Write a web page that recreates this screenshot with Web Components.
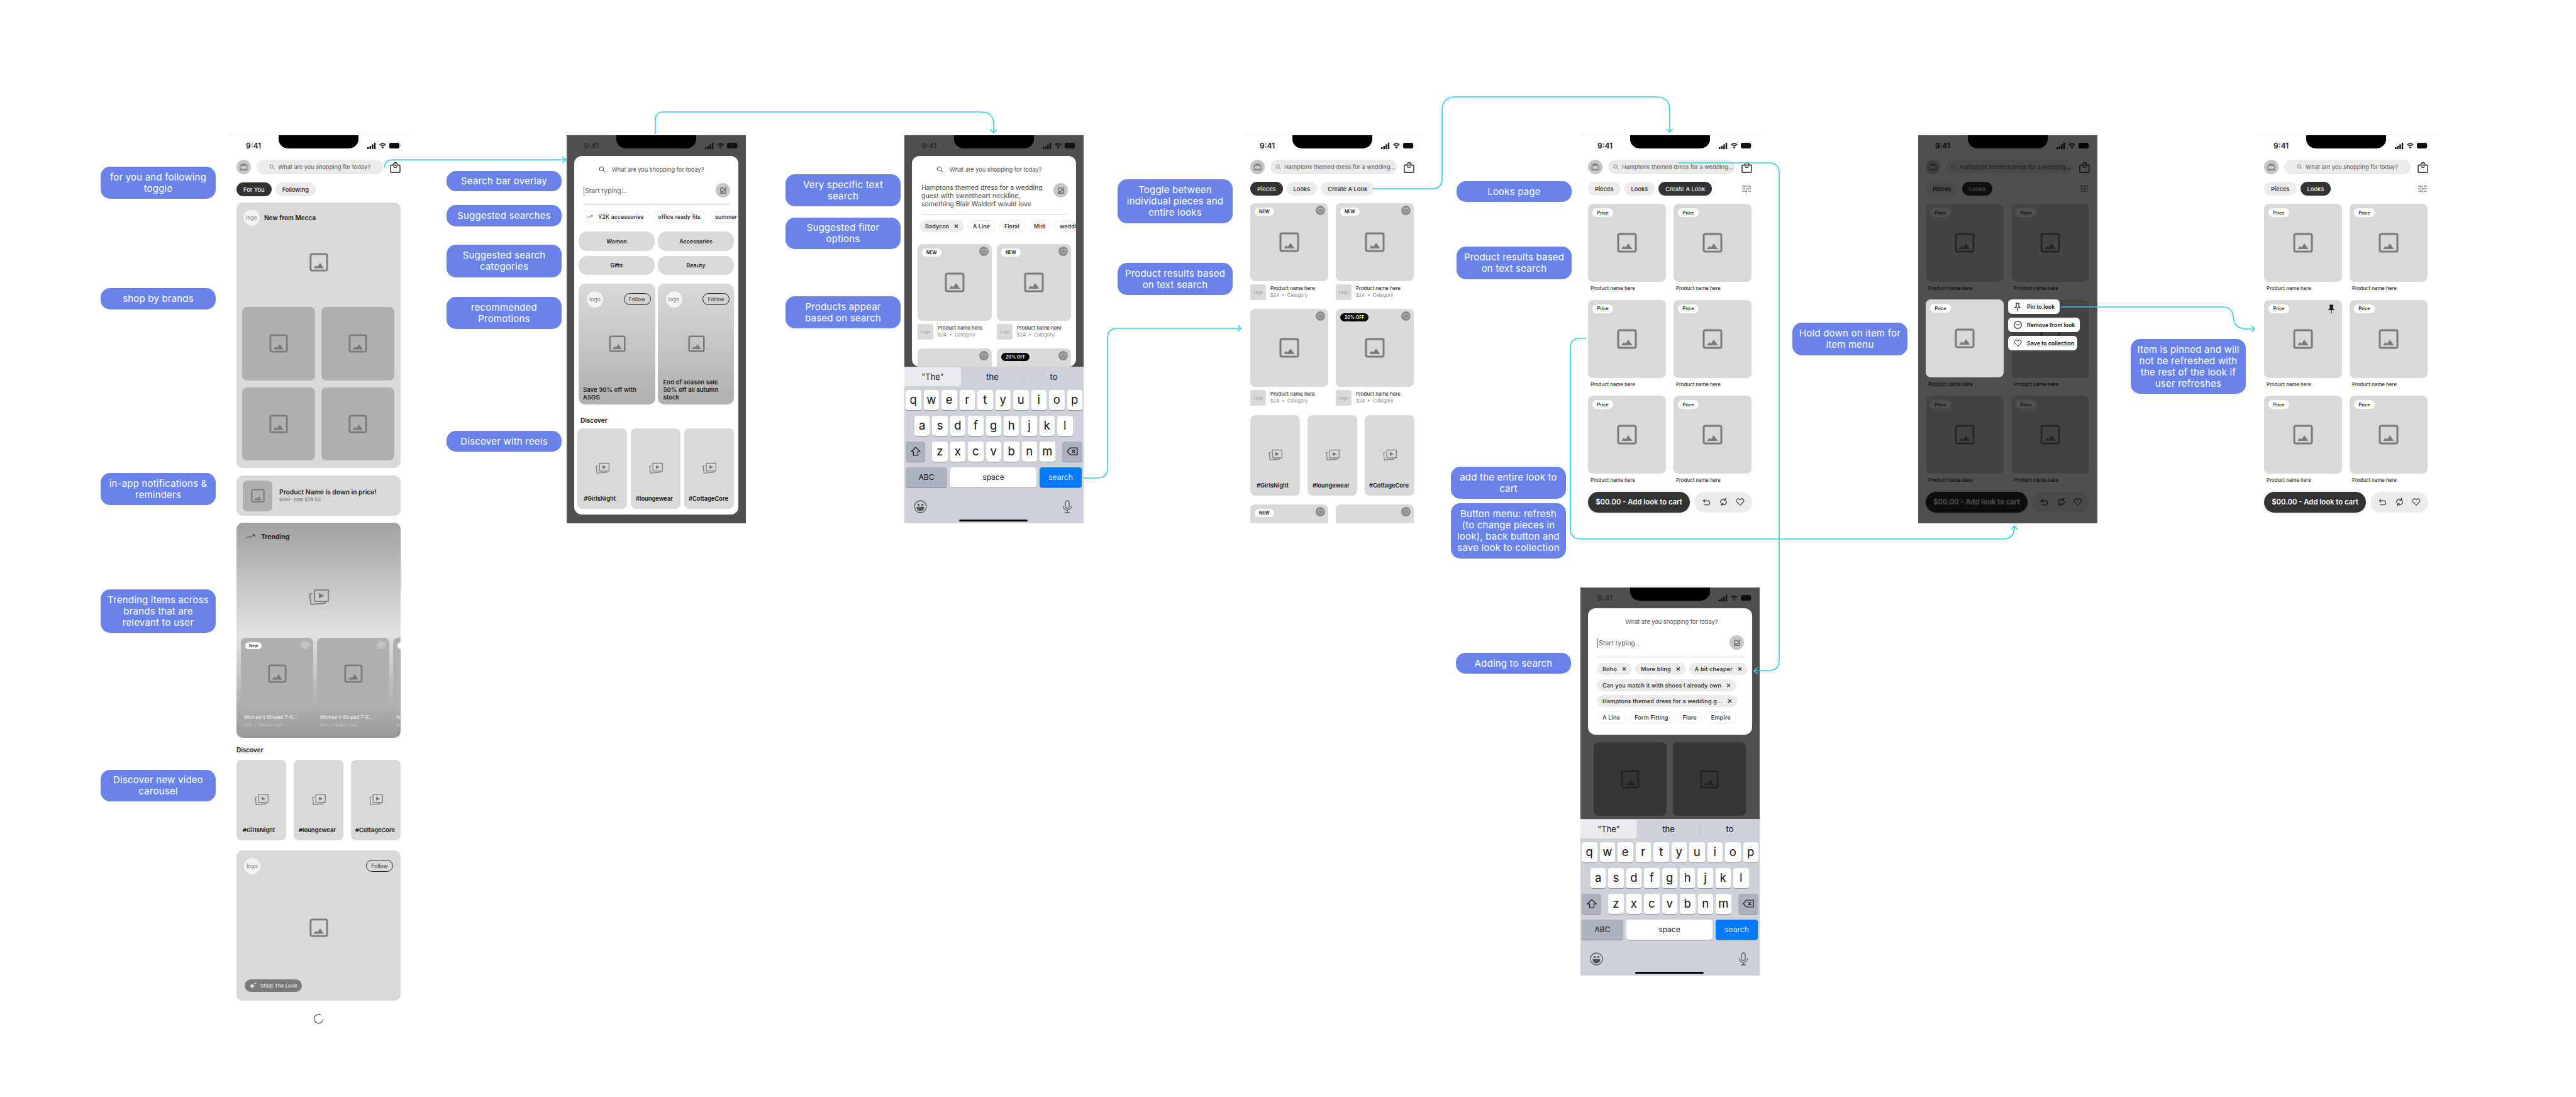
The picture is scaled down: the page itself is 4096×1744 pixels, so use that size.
<!DOCTYPE html>
<html>
<head>
<meta charset="utf-8">
<title>Shopping flow</title>
<style>
  html, body { margin: 0; background: #fff; }
  body { font-family: 'Inter', 'Noto Sans', sans-serif; color: #111; }
</style>
</head>
<body>
<flow-canvas>
  <!-- column 1 -->
  <note-chip x="160" y="265" h="51">for you and following toggle</note-chip>
  <note-chip x="160" y="458" h="34">shop by brands</note-chip>
  <note-chip x="160" y="752" h="51">in-app notifications &amp; reminders</note-chip>
  <note-chip x="160" y="937" h="69">Trending items across brands that are relevant to user</note-chip>
  <note-chip x="160" y="1224" h="50">Discover new video carousel</note-chip>

  <phone-frame x="364" y="214" h="1421">
    <shop-header query="What are you shopping for today?" centered></shop-header>
    <tab-row style="margin-top:13px">
      <tab-pill active>For You</tab-pill><tab-pill>Following</tab-pill>
    </tab-row>
    <screen-stack style="margin-top:10px">
      <brand-card></brand-card>
      <price-alert style="margin-top:12px"></price-alert>
      <trending-card style="margin-top:11px"></trending-card>
      <section-title style="margin-top:12px">Discover</section-title>
      <reel-row style="margin-top:9px"></reel-row>
      <look-promo style="margin-top:16px"></look-promo>
      <load-spinner style="margin-top:20px"></load-spinner>
    </screen-stack>
  </phone-frame>

  <!-- column 2 -->
  <note-chip x="710" y="272" h="32">Search bar overlay</note-chip>
  <note-chip x="710" y="326" h="34">Suggested searches</note-chip>
  <note-chip x="710" y="389" h="52">Suggested search categories</note-chip>
  <note-chip x="710" y="472" h="51">recommended Promotions</note-chip>
  <note-chip x="710" y="685" h="33">Discover with reels</note-chip>

  <phone-frame x="901" y="214" h="618" dark>
    <search-sheet glass style="height:570px">
      <chip-row slot="chips" style="padding-left:10px">
        <filter-chip trend>Y2K accessories</filter-chip>
        <filter-chip>office ready fits</filter-chip>
        <filter-chip>summer fits</filter-chip>
      </chip-row>
      <category-grid style="margin:14px 0 0 7px"></category-grid>
      <promo-pair style="margin:14px 0 0 7px"></promo-pair>
      <section-title style="margin:18px 0 0 10px">Discover</section-title>
      <reel-row style="margin:6px 0 0 5px;width:249px"></reel-row>
    </search-sheet>
  </phone-frame>

  <!-- column 3 -->
  <note-chip x="1249" y="277" h="51">Very specific text search</note-chip>
  <note-chip x="1249" y="346" h="50">Suggested filter options</note-chip>
  <note-chip x="1249" y="471" h="51">Products appear based on search</note-chip>

  <phone-frame x="1438" y="214" h="618" dark>
    <search-sheet glass style="flex:1;min-height:0">
      <span slot="query" style="display:block;margin:2px 0 9px;color:#444">Hamptons themed dress for a wedding<br>guest with sweetheart neckline,<br>something Blair Waldorf would love</span>
      <chip-row slot="chips" style="padding-left:12px">
        <filter-chip selected>Bodycon</filter-chip>
        <filter-chip>A Line</filter-chip>
        <filter-chip>Floral</filter-chip>
        <filter-chip>Midi</filter-chip>
        <filter-chip>wedding</filter-chip>
      </chip-row>
      <product-grid cols="118" gap="8" style="margin:19px 0 0 9px">
        <product-card tile="122" badge="NEW"></product-card>
        <product-card tile="122" badge="NEW"></product-card>
        <product-card tile="122" noinfo></product-card>
        <product-card tile="122" noinfo badge="20% OFF" black></product-card>
      </product-grid>
    </search-sheet>
    <ios-keyboard></ios-keyboard>
  </phone-frame>

  <!-- column 4 -->
  <note-chip x="1777" y="285" h="70">Toggle between individual pieces and entire looks</note-chip>
  <note-chip x="1777" y="418" h="51">Product results based on text search</note-chip>

  <phone-frame x="1976" y="214" h="618">
    <shop-header query="Hamptons themed dress for a wedding..."></shop-header>
    <tab-row style="margin-top:12px">
      <tab-pill active>Pieces</tab-pill><tab-pill>Looks</tab-pill><tab-pill>Create A Look</tab-pill>
    </tab-row>
    <screen-stack style="margin-top:12px">
      <product-grid cols="124" gap="12">
        <product-card tile="124" badge="NEW"></product-card>
        <product-card tile="124" badge="NEW"></product-card>
        <product-card tile="124"></product-card>
        <product-card tile="124" badge="20% OFF" black></product-card>
      </product-grid>
      <reel-row style="margin-top:15px"></reel-row>
      <product-grid cols="124" gap="12" style="margin-top:14px">
        <product-card tile="124" noinfo badge="NEW"></product-card>
        <product-card tile="124" noinfo></product-card>
      </product-grid>
    </screen-stack>
  </phone-frame>

  <!-- column 5 -->
  <note-chip x="2316" y="288" h="33">Looks page</note-chip>
  <note-chip x="2316" y="392" h="52">Product results based on text search</note-chip>
  <note-chip x="2307" y="742" h="51">add the entire look to cart</note-chip>
  <note-chip x="2307" y="800" h="88">Button menu: refresh (to change pieces in look), back button and save look to collection</note-chip>
  <note-chip x="2315" y="1038" h="33">Adding to search</note-chip>

  <phone-frame x="2513" y="214" h="618">
    <shop-header query="Hamptons themed dress for a wedding..."></shop-header>
    <tab-row filter style="margin-top:12px">
      <tab-pill>Pieces</tab-pill><tab-pill>Looks</tab-pill><tab-pill active>Create A Look</tab-pill>
    </tab-row>
    <screen-stack style="margin-top:13px">
      <look-grid></look-grid>
      <look-actions></look-actions>
    </screen-stack>
  </phone-frame>

  <phone-frame x="2513" y="933" h="618" dark>
    <screen-area>
      <search-sheet style="height:201px;margin:0">
        <chip-row slot="chips" wrap style="padding-left:14px;letter-spacing:.2px">
          <filter-chip selected>Boho</filter-chip>
          <filter-chip selected>More bling</filter-chip>
          <filter-chip selected>A bit cheaper</filter-chip>
          <filter-chip selected>Can you match it with shoes I already own</filter-chip>
          <filter-chip selected>Hamptons themed dress for a wedding g...</filter-chip>
          <filter-chip>A Line</filter-chip>
          <filter-chip>Form Fitting</filter-chip>
          <filter-chip>Flare</filter-chip>
          <filter-chip>Empire</filter-chip>
        </chip-row>
      </search-sheet>
      <shade-tiles></shade-tiles>
    </screen-area>
    <ios-keyboard></ios-keyboard>
  </phone-frame>

  <!-- column 6 -->
  <note-chip x="2850" y="513" h="52">Hold down on item for item menu</note-chip>

  <phone-frame x="3050" y="214" h="618" dim>
    <shop-header query="Hamptons themed dress for a wedding..."></shop-header>
    <tab-row filter style="margin-top:12px">
      <tab-pill>Pieces</tab-pill><tab-pill active>Looks</tab-pill>
    </tab-row>
    <screen-stack style="margin-top:13px">
      <look-grid></look-grid>
      <look-actions></look-actions>
    </screen-stack>
    <look-card slot="over" style="position:absolute;left:12px;top:261px;width:124px"></look-card>
    <item-menu slot="over" style="position:absolute;left:143px;top:261px"></item-menu>
  </phone-frame>

  <!-- column 7 -->
  <note-chip x="3388" y="539" h="87">Item is pinned and will not be refreshed with the rest of the look if user refreshes</note-chip>

  <phone-frame x="3588" y="214" h="618">
    <shop-header query="What are you shopping for today?" centered></shop-header>
    <tab-row filter style="margin-top:12px">
      <tab-pill>Pieces</tab-pill><tab-pill active>Looks</tab-pill>
    </tab-row>
    <screen-stack style="margin-top:13px">
      <look-grid pinned="2"></look-grid>
      <look-actions></look-actions>
    </screen-stack>
  </phone-frame>

  <flow-lines></flow-lines>
</flow-canvas>

<script>
// small svg set, all drawn by hand. c = colour
const icons = {
  image: (s, c = '#7a7a7a') => `<svg width="${s}" height="${s}" viewBox="0 0 32 32"><rect x="2" y="2" width="28" height="28" rx="2.5" fill="none" stroke="${c}" stroke-width="3"/><path d="M7 26l4-5 2.500 2.500 4.500-6.500 6.500 9z" fill="${c}"/></svg>`,
  video: (s, c = '#7a7a7a') => `<svg width="${s}" height="${s}" viewBox="0 0 32 32" fill="none" stroke="${c}" stroke-width="1.800"><rect x="9" y="5" width="22" height="18"/><path d="M16 9.500l9 4.500-9 4.500z" fill="${c}" stroke="none"/><path d="M5.500 10.500L1.500 11.500 3.500 28 26 26V23.500"/></svg>`,
  glass: (s, c = '#444') => `<svg width="${s}" height="${s}" viewBox="0 0 16 16" fill="none" stroke="${c}" stroke-width="1.300"><circle cx="6.500" cy="6.500" r="4.800"/><path d="M10 10l4.500 4.500"/></svg>`,
  bag: (c = '#111') => `<svg width="17" height="18" viewBox="0 0 17 18" fill="none" stroke="${c}" stroke-width="1.300"><rect x="1" y="5.500" width="15" height="11.500" rx=".8"/><path d="M5 5.500C5 .5 12 .5 12 5.500M5.500 7.500c1.500 2.500 4.500 2.500 6 0"/></svg>`,
  avatar: () => `<svg width="23" height="23" viewBox="0 0 23 23"><circle cx="11.500" cy="11.500" r="11.500" fill="#c6c6c6"/><path d="M5.500 17V10.500a6 5 0 0 1 12 0V17z" fill="#8d8d8d"/><rect x="7" y="10" width="9" height="4.500" rx="2" fill="#cfcfcf"/></svg>`,
  signal: (c) => `<svg width="14" height="10" viewBox="0 0 14 10" fill="${c}"><rect y="7" width="2.400" height="3"/><rect x="3.600" y="5" width="2.400" height="5"/><rect x="7.200" y="2.500" width="2.400" height="7.500"/><rect x="10.800" width="2.400" height="10"/></svg>`,
  wifi: (c) => `<svg width="11" height="9" viewBox="0 0 11 9" fill="none" stroke="${c}" stroke-width="1.500"><path d="M.7 3.200a7 7 0 0 1 9.600 0M2.500 5.200a4.400 4.400 0 0 1 6 0"/><circle cx="5.500" cy="7.500" r=".7" fill="${c}"/></svg>`,
  battery: (c) => `<svg width="18" height="9" viewBox="0 0 18 9"><rect width="16" height="9" rx="2.500" fill="${c}"/><rect x="16.500" y="3" width="1.200" height="3" rx=".6" fill="${c}" opacity=".5"/></svg>`,
  trend: (s) => `<svg width="${s}" height="${s * .5}" viewBox="0 0 20 10" fill="none" stroke="#222" stroke-width="1.100"><path d="M1 9l5-4.500 3.500 2.500L18 1.500M14 1.200h4.200V5"/></svg>`,
  photoSearch: () => `<svg width="12" height="12" viewBox="0 0 16 16" fill="none" stroke="#555" stroke-width="1.400"><path d="M8 2.500H2.500v11h11V9"/><circle cx="11.500" cy="4.200" r="2.200"/><path d="M8.500 9.500c.4-1.800 5.600-1.800 6 0M4 11.500l2-2.500 2 2.500" /></svg>`,
  cross: (c = '#222') => `<svg width="7" height="7" viewBox="0 0 8 8" fill="none" stroke="${c}" stroke-width="1.300"><path d="M1 1l6 6M7 1L1 7"/></svg>`,
  heart: (s, c, w = 1.300) => `<svg width="${s}" height="${s}" viewBox="0 0 16 16" fill="none" stroke="${c}" stroke-width="${w}"><path d="M8 14L2.300 8.200a3.500 3.500 0 0 1 0-5 3.500 3.500 0 0 1 5 0l.7.8.7-.8a3.500 3.500 0 0 1 5 0 3.500 3.500 0 0 1 0 5z"/></svg>`,
  undo: () => `<svg width="13" height="11" viewBox="0 0 14 12" fill="none" stroke="#333" stroke-width="1.300"><path d="M4 1L1.500 3.500 4 6M1.500 3.500H9a3 3 0 0 1 0 7H2.500"/></svg>`,
  refresh: () => `<svg width="13" height="14" viewBox="0 0 14 15" fill="none" stroke="#333" stroke-width="1.300"><path d="M2 9a5.200 5.200 0 0 1 8-5.500M12 6a5.200 5.200 0 0 1-8 5.500"/><path d="M10.500.8v3.500H7M3.500 14.200v-3.500H7"/></svg>`,
  sliders: () => `<svg width="14" height="14" viewBox="0 0 14 14" fill="none" stroke="#555" stroke-width="1"><path d="M0 3h8M11 3h3M0 7h3M6 7h8M0 11h6M9 11h5M9.500 1v4M4.500 5v4M7.500 9v4"/></svg>`,
  pin: (fill) => `<svg width="12" height="14" viewBox="0 0 12 14" fill="${fill ? '#111' : 'none'}" stroke="#111" stroke-width="1.200"><path d="M3 1h6M4 1v5.500L2 8.500h8L8 6.500V1M6 8.500V14"/></svg>`,
  minus: () => `<svg width="13" height="13" viewBox="0 0 13 13" fill="none" stroke="#111" stroke-width="1.100"><circle cx="6.500" cy="6.500" r="5.800"/><path d="M3.500 6.500h6"/></svg>`,
  spark: () => `<svg width="12" height="12" viewBox="0 0 12 12" fill="#fff"><path d="M5 2l1.200 3.300L9.500 6.500 6.200 7.700 5 11 3.800 7.700.5 6.500l3.300-1.200zM10 .5l.5 1.500 1.500.5-1.500.5-.5 1.500-.5-1.500L8 2.500 9.500 2z"/></svg>`,
  smile: () => `<svg width="21" height="21" viewBox="0 0 21 21" fill="none" stroke="#555" stroke-width="1.300"><circle cx="10.500" cy="10.500" r="9.500"/><path d="M5 11.500h11c0 7-11 7-11 0z" fill="#555"/><circle cx="7.500" cy="7.500" r="1.100" fill="#555"/><circle cx="13.500" cy="7.500" r="1.100" fill="#555"/></svg>`,
  mic: () => `<svg width="16" height="21" viewBox="0 0 16 21" fill="none" stroke="#555" stroke-width="1.300"><rect x="5" y="1" width="6" height="12" rx="3"/><path d="M1.500 9.500a6.500 6.500 0 0 0 13 0M8 16v3.500M4 20h8"/></svg>`,
  shift: () => `<svg width="16" height="15" viewBox="0 0 16 15" fill="none" stroke="#111" stroke-width="1.200"><path d="M8 1L1 8h3.500v6h7V8H15z"/></svg>`,
  del: () => `<svg width="18" height="13" viewBox="0 0 18 13" fill="none" stroke="#111" stroke-width="1.200"><path d="M5.500 1H17v11H5.500L1 6.500zM8.500 4l5 5M13.500 4l-5 5"/></svg>`
};

// every element renders its shadow root once, when it lands in the page
class Box extends HTMLElement {
  connectedCallback() {
    if (this.shadowRoot) return;
    this.attachShadow({ mode: 'open' });
    this.shadowRoot.innerHTML = `<style>${this.constructor.css}</style>${this.render()}`;
  }
  render() { return '<slot></slot>'; }
}

const box = (tag, css, render) => {
  class Element extends Box {
    static get css() { return css; }
    render() { return render ? render(this) : '<slot></slot>'; }
  }
  customElements.define(tag, Element);
};

class FlowCanvas extends Box {
  static get css() { return ':host{display:block;position:relative;width:4096px;height:1744px;background:#fff;overflow:hidden}'; }
}
customElements.define('flow-canvas', FlowCanvas);

// note and phone sit on a free canvas, so their x and y are the content
class NoteChip extends Box {
  static get css() {
    return `:host{position:absolute;width:183px;display:flex;align-items:center;justify-content:center;box-sizing:border-box;
      padding:0 10px;background:#6983ea;border-radius:15px;color:#fff;font-size:15px;line-height:18px;text-align:center;letter-spacing:.2px}`;
  }
  connectedCallback() {
    this.style.left = this.getAttribute('x') + 'px';
    this.style.top = this.getAttribute('y') + 'px';
    this.style.height = this.getAttribute('h') + 'px';
    super.connectedCallback();
  }
}
customElements.define('note-chip', NoteChip);

class PhoneFrame extends Box {
  static get css() {
    return `:host{position:absolute;width:285px;box-sizing:border-box;display:flex;flex-direction:column;overflow:hidden;
        background:#fff;border-top:1px solid #eef0f3;--status:#222}
      :host([dark]){background:#4f4f4f;border-top-color:#fff;--status:#2a2a2a}
      .shade{position:absolute;inset:0;background:rgba(0,0,0,.69)}
      .over{position:absolute;inset:0}`;
  }
  connectedCallback() {
    this.style.left = this.getAttribute('x') + 'px';
    this.style.top = this.getAttribute('y') + 'px';
    this.style.height = this.getAttribute('h') + 'px';
    super.connectedCallback();
  }
  render() {
    const dim = this.hasAttribute('dim');
    return `<status-bar></status-bar><slot></slot>${dim ? '<div class="shade"></div><div class="over"><slot name="over"></slot></div>' : ''}`;
  }
}
customElements.define('phone-frame', PhoneFrame);

box('status-bar', `
  :host{display:flex;flex:none;height:33px;align-items:center;justify-content:space-between;padding:0 12px 0 27px;position:relative;color:var(--status)}
  .time{font-size:12px;font-weight:600}
  .notch{position:absolute;left:79px;top:0;width:127px;height:21px;background:#000;border-radius:0 0 15px 15px}
  .right{display:flex;align-items:center;gap:5px}
  svg{display:block}
`, () => `<span class="time">9:41</span><div class="notch"></div><div class="right">${icons.signal('#111')}${icons.wifi('#111')}${icons.battery('#111')}</div>`);

box('shop-header', `
  :host{display:flex;align-items:center;padding:6px 12px 0;gap:9px;flex:none}
  .search{width:201px;height:23px;border-radius:12px;background:#ebebeb;display:flex;align-items:center;gap:5px;padding:0 8px;box-sizing:border-box;
    font-size:9.200px;color:#555;white-space:nowrap;overflow:hidden}
  :host([centered]) .search{justify-content:center}
  .bag{margin-left:2px}
  svg{display:block;flex:none}
`, (el) => `${icons.avatar()}<div class="search">${icons.glass(9, '#555')}<span>${el.getAttribute('query')}</span></div><div class="bag">${icons.bag()}</div>`);

box('tab-row', `
  :host{display:flex;align-items:center;gap:6px;padding:0 12px;flex:none}
  .f{margin-left:auto;margin-right:2px;display:flex}
`, (el) => `<slot></slot>${el.hasAttribute('filter') ? `<div class="f">${icons.sliders()}</div>` : ''}`);

box('tab-pill', `
  :host{display:inline-flex;align-items:center;height:22px;padding:0 11px;border-radius:11px;background:#ebebeb;color:#222;font-size:9.300px;font-weight:500;white-space:nowrap}
  :host([active]){background:#333;color:#f2f2f2}
`);

box('screen-stack', ':host{display:block;padding:0 12px}');
box('screen-area', ':host{display:block;flex:1;min-height:0;overflow:hidden;padding:0 12px}');
box('section-title', ':host{display:block;font-size:10px;font-weight:600;line-height:14px;color:#111}');

// grey placeholder with an image mark in its middle
box('photo-tile', `
  :host{display:flex;position:relative;align-items:center;justify-content:center;background:#d9d9d9;border-radius:8px;flex:none}
  :host([tone=mid]){background:#b0b0b0}
  :host([tone=black]){background:#363636}
  svg{display:block}
`, (el) => {
  const size = +(el.getAttribute('icon') || 32);
  const c = el.getAttribute('tone') === 'black' ? '#222' : '#7a7a7a';
  return `${icons.image(size, c)}<slot></slot>`;
});

box('brand-logo', `
  :host{width:26px;height:26px;border-radius:50%;background:#f2f2f2;color:#777;font-size:8.500px;font-weight:400;display:flex;align-items:center;justify-content:center;flex:none}
`, () => 'logo');

box('follow-btn', `
  :host{width:43px;height:19px;box-sizing:border-box;border:1px solid #222;border-radius:10px;font-size:8.500px;color:#333;display:flex;align-items:center;justify-content:center;flex:none}
`, () => 'Follow');

box('brand-card', `
  :host{display:flex;flex-direction:column;height:422px;box-sizing:border-box;background:#d9d9d9;border-radius:10px;padding:11px 9px 12px}
  .head{display:flex;align-items:center;gap:7px;padding-left:2px;font-size:10px;font-weight:600}
  .hero{flex:1;display:flex;align-items:center;justify-content:center;padding-bottom:13px}
  .grid{display:grid;grid-template-columns:116px 116px;grid-auto-rows:116.500px;gap:11px 10px}
  svg{display:block}
`, () => `
  <div class="head"><brand-logo></brand-logo><span>New from Mecca</span></div>
  <div class="hero">${icons.image(30)}</div>
  <div class="grid">${'<photo-tile tone="mid" icon="30"></photo-tile>'.repeat(4)}</div>`);

box('price-alert', `
  :host{display:flex;align-items:center;gap:11px;height:64px;box-sizing:border-box;background:#d9d9d9;border-radius:10px;padding:0 10px}
  photo-tile{width:47px;height:49px}
  .t{font-size:10.300px;font-weight:600;color:#222;line-height:13px}
  .s{font-size:7.500px;color:#666;line-height:11px}
  .s s{color:#888;margin-right:6px}
`, () => `<photo-tile tone="mid" icon="22"></photo-tile><div><div class="t">Product Name is down in price!</div><div class="s"><s>$100</s>now $39.50</div></div>`);

box('trend-item', `
  :host{display:block;width:115px;flex:none}
  photo-tile{height:114.500px}
  .badge{position:absolute;left:7px;top:7px;height:11px;padding:0 6px;border-radius:6px;background:#fff;color:#333;font-size:6.500px;font-weight:600;display:flex;align-items:center}
  .heart{position:absolute;right:5px;top:5px;width:15px;height:13px;border-radius:7px;background:#bfbfbf;display:flex;align-items:center;justify-content:center}
  .n{font-size:7.600px;font-weight:500;color:#ececec;margin:7px 0 0 5px;line-height:10px;white-space:nowrap}
  .p{font-size:6.600px;color:#c6c6c6;margin:3px 0 0 5px;line-height:9px;white-space:nowrap}
  svg{display:block}
`, (el) => `
  <photo-tile tone="mid" icon="30">
    ${el.hasAttribute('badge') ? '<span class="badge">New</span>' : ''}
    <span class="heart">${icons.heart(9, '#e6e6e6', 1.2)}</span>
  </photo-tile>
  <div class="n">Women's Striped T-S...</div><div class="p">$24 &nbsp;•&nbsp; Beach Gear</div>`);

box('trending-card', `
  :host{display:flex;flex-direction:column;height:342px;overflow:hidden;border-radius:10px;background:linear-gradient(180deg,#a0a0a0 0%,#e2e2e2 52%,#989898 100%)}
  .head{height:44px;flex:none;display:flex;align-items:center;gap:9px;padding-left:14px;font-size:10.500px;font-weight:600}
  .hero{flex:1;display:flex;align-items:center;justify-content:center;padding-top:9px}
  .row{display:flex;gap:6px;padding-left:7px;height:159px;flex:none}
  svg{display:block}
`, () => `
  <div class="head">${icons.trend(16)}<span>Trending</span></div>
  <div class="hero">${icons.video(32)}</div>
  <div class="row"><trend-item badge></trend-item><trend-item></trend-item><trend-item badge></trend-item></div>`);

box('reel-row', `
  :host{display:flex;justify-content:space-between}
  .r{width:79px;height:128px;background:#d9d9d9;border-radius:8px;position:relative;display:flex;flex-direction:column;align-items:center;box-sizing:border-box;padding-top:52px}
  .r span{position:absolute;top:105px;font-size:9.300px;font-weight:600;line-height:14px;white-space:nowrap;color:#111}
  svg{display:block}
`, () => [['#GirlsNight', 10], ['#loungewear', 8], ['#CottageCore', 7]]
  .map(([t, x]) => `<div class="r">${icons.video(22)}<span style="left:${x}px">${t}</span></div>`).join(''));

box('look-promo', `
  :host{display:flex;flex-direction:column;height:239px;box-sizing:border-box;background:#d9d9d9;border-radius:10px;padding:12px 12px 14px}
  .head{display:flex;justify-content:space-between;align-items:flex-start}
  follow-btn{margin-top:3px}
  .hero{flex:1;display:flex;align-items:center;justify-content:center;padding-top:2px}
  .shop{align-self:flex-start;height:20px;margin-left:1px;display:flex;align-items:center;gap:6px;padding:0 7px;border-radius:10px;background:#7a7a7a;color:#e6e6e6;font-size:8.200px;font-weight:500}
  svg{display:block}
`, () => `<div class="head"><brand-logo></brand-logo><follow-btn></follow-btn></div>
  <div class="hero">${icons.image(30)}</div><div class="shop">${icons.spark()}<span>Shop The Look</span></div>`);

box('load-spinner', `
  :host{display:flex;justify-content:center}
`, () => `<svg width="17" height="17" viewBox="0 0 17 17" fill="none" stroke="#444" stroke-width="1.200"><path d="M12 2.500A7 7 0 1 0 15.500 9"/></svg>`);

box('search-sheet', `
  :host{display:block;margin:0 12px;box-sizing:border-box;background:#fff;border-radius:12px;overflow:hidden;flex:none}
  .title{height:42px;display:flex;align-items:center;justify-content:center;gap:10px;font-size:9.200px;color:#555;padding-right:16px}
  :host(:not([glass])) .title{padding:0 0 0 5px}
  .input{min-height:36px;margin:0 13px 0 15px;box-sizing:border-box;border-bottom:1px solid #d8d8d8;display:flex;justify-content:space-between;align-items:flex-start;font-size:10.500px;line-height:13px;color:#555}
  .typing{display:flex;align-items:center;gap:1px;margin-top:6px}
  .typing i{display:block;width:1px;height:15px;background:#666}
  .btn{flex:none;width:23px;height:23px;border-radius:50%;background:#c6c6c6;display:flex;align-items:center;justify-content:center;margin-top:1px}
  .chips{margin-top:9px}
  svg{display:block}
`, (el) => `
  <div class="title">${el.hasAttribute('glass') ? icons.glass(11, '#333') : ''}<span>What are you shopping for today?</span></div>
  <div class="input"><slot name="query"><span class="typing"><i></i>Start typing...</span></slot><div class="btn">${icons.photoSearch()}</div></div>
  <div class="chips"><slot name="chips"></slot></div>
  <slot></slot>`);

box('chip-row', `
  :host{display:flex;gap:5px;white-space:nowrap}
  :host([wrap]){flex-wrap:wrap;gap:6.500px 5px}
`);

box('filter-chip', `
  :host{display:inline-flex;align-items:center;flex:none;height:19px;box-sizing:border-box;padding:0 8px;border:1px solid #ececec;border-radius:10px;background:#fff;
    font-size:9px;font-weight:500;color:#222;gap:8px}
  :host([selected]){background:#ebebeb;border-color:#ebebeb}
  svg{display:block}
`, (el) => `${el.hasAttribute('trend') ? icons.trend(11) : ''}<slot></slot>${el.hasAttribute('selected') ? icons.cross() : ''}`);

box('category-grid', `
  :host{display:grid;grid-template-columns:121px 121px;grid-auto-rows:30.500px;gap:8px 5px}
  div{background:#d9d9d9;border-radius:14px;display:flex;align-items:center;justify-content:center;font-size:8.800px;font-weight:600;color:#222}
`, () => ['Women', 'Accessories', 'Gifts', 'Beauty'].map((t) => `<div>${t}</div>`).join(''));

box('promo-card', `
  :host{display:flex;flex-direction:column;width:121.500px;height:192px;box-sizing:border-box;border-radius:10px;padding:12px 7px 0 13px;background:linear-gradient(180deg,#d9d9d9,#b0b0b0);position:relative}
  .head{display:flex;justify-content:space-between;align-items:flex-start}
  follow-btn{margin-top:3px}
  .hero{display:flex;justify-content:center;margin-top:44px;padding-right:4px}
  p{position:absolute;left:var(--tx,7px);bottom:5px;margin:0;font-size:9.600px;font-weight:600;line-height:12px;color:#222}
  svg{display:block}
`, (el) => `<div class="head"><brand-logo></brand-logo><follow-btn></follow-btn></div><div class="hero">${icons.image(27)}</div><p><slot></slot></p>`);

box('promo-pair', `
  :host{display:flex;gap:4px}
`, () => `<promo-card>Save 30% off with<br>ASOS</promo-card><promo-card style="--tx:9px">End of season sale<br>50% off all autumn<br>stock</promo-card>`);

box('product-grid', `
  :host{display:grid;grid-template-columns:repeat(2,var(--col));column-gap:var(--gap);row-gap:14px}
`, (el) => {
  el.style.setProperty('--col', el.getAttribute('cols') + 'px');
  el.style.setProperty('--gap', el.getAttribute('gap') + 'px');
  return '<slot></slot>';
});

box('product-card', `
  :host{display:block}
  .badge{position:absolute;left:7px;top:7px;height:13px;padding:0 7px;border-radius:7px;background:#fff;color:#111;font-size:7px;font-weight:600;display:flex;align-items:center}
  :host([black]) .badge{background:#000;color:#fff}
  .heart{position:absolute;right:5px;top:4px;width:15px;height:15px;border-radius:50%;background:#8a8a8a;display:flex;align-items:center;justify-content:center}
  .info{display:flex;gap:7px;margin-top:5px;align-items:center}
  .logo{width:25px;height:25px;border-radius:3px;background:#d9d9d9;color:#9a9a9a;font-size:6.500px;display:flex;align-items:center;justify-content:center;flex:none}
  .n{font-size:7.800px;font-weight:500;color:#333;line-height:11px;white-space:nowrap}
  .p{font-size:7.500px;color:#888;line-height:12px;white-space:nowrap}
  svg{display:block}
`, (el) => {
  const badge = el.getAttribute('badge');
  const info = el.hasAttribute('noinfo') ? '' : `<div class="info"><div class="logo">Logo</div><div><div class="n">Product name here</div><div class="p">$24 &nbsp;•&nbsp; Category</div></div></div>`;
  return `<photo-tile style="height:${el.getAttribute('tile')}px" icon="32">
    ${badge ? `<span class="badge">${badge}</span>` : ''}
    <span class="heart">${icons.heart(10, '#d9d9d9', 1.4)}</span>
  </photo-tile>${info}`;
});

box('look-card', `
  :host{display:block}
  photo-tile{height:124px}
  .badge{position:absolute;left:7px;top:7px;height:14px;width:33px;border-radius:7px;background:#fff;color:#222;font-size:7.200px;font-weight:600;display:flex;align-items:center;justify-content:center}
  .pin{position:absolute;right:11px;top:7px}
  .n{font-size:7.800px;font-weight:500;color:#333;margin:5px 0 0 4px;line-height:11px}
  svg{display:block}
`, (el) => `<photo-tile icon="32"><span class="badge">Price</span>${el.hasAttribute('pinned') ? `<span class="pin">${icons.pin(true)}</span>` : ''}</photo-tile><div class="n">Product name here</div>`);

box('look-grid', `
  :host{display:grid;grid-template-columns:124px 124px;grid-auto-rows:152.500px;column-gap:12px}
`, (el) => {
  const pinned = el.getAttribute('pinned');
  return [0, 1, 2, 3, 4, 5].map((i) => `<look-card${String(i) === pinned ? ' pinned' : ''}></look-card>`).join('');
});

box('look-actions', `
  :host{display:flex;gap:7px;height:33px}
  .add{width:162px;border-radius:17px;background:#333;color:#fff;font-size:11.300px;font-weight:600;display:flex;align-items:center;justify-content:center;box-shadow:0 0 8px rgba(0,0,0,.12)}
  .more{flex:none;width:92px;border-radius:17px;background:#ebebeb;display:flex;align-items:center;justify-content:space-between;padding:0 12px 0 13px;box-sizing:border-box}
  svg{display:block}
`, () => `<div class="add">$00.00 - Add look to cart</div><div class="more">${icons.undo()}${icons.refresh()}${icons.heart(14, '#333', 1.2)}</div>`);

box('item-menu', `
  :host{display:flex;flex-direction:column;align-items:flex-start;gap:6px}
  .i{height:23px;box-sizing:border-box;background:#fff;border-radius:6px;display:flex;align-items:center;font-size:8.800px;font-weight:600;color:#111;padding:0 8px;white-space:nowrap}
  .g{width:21px;flex:none;display:flex;padding-left:1px}
  svg{display:block}
`, () => `
  <div class="i" style="width:82px"><span class="g">${icons.pin(false)}</span>Pin to look</div>
  <div class="i" style="width:114px"><span class="g">${icons.minus()}</span>Remove from look</div>
  <div class="i" style="width:110px"><span class="g">${icons.heart(13, '#111', 1.2)}</span>Save to collection</div>`);

box('shade-tiles', `
  :host{display:grid;grid-template-columns:116px 116px;gap:10px;margin:12px 0 0 9px}
  photo-tile{height:117px}
`, () => '<photo-tile tone="black" icon="30"></photo-tile>'.repeat(2));

box('ios-keyboard', `
  :host{display:block;flex:none;height:249px;background:#cdd1da;margin-top:auto;position:relative;box-sizing:border-box;color:#111}
  .sug{display:grid;grid-template-columns:90px 100px 95px;height:30px;margin-top:1px;font-size:13px;text-align:center;line-height:30px}
  .sug div:first-child{background:#e9eaed;border-radius:0 4px 4px 0}
  .sug div:nth-child(3){position:relative}
  .sep{position:absolute;left:0;top:5px;bottom:5px;width:1px;background:#bdc1ca}
  .row{display:flex;gap:4px;height:31.500px;margin-top:9.500px}
  .row.a{padding-left:2px;margin-top:6px}
  .row.b{padding-left:16px}
  .row.c{padding-left:2px}
  .row.d{padding-left:2px;gap:5px}
  .k{width:24.500px;background:#fff;border-radius:4px;box-shadow:0 1px 0 #8d9097;font-size:18.500px;display:flex;align-items:center;justify-content:center;padding-bottom:2px;box-sizing:border-box}
  .row.b .k{width:24.400px}
  .f{background:#acb1bf;padding:0}
  .w{font-size:12px;padding:0}
  .blue{background:#007aff;color:#e8f1ff}
  .tools{position:absolute;left:15px;right:18px;top:212px;display:flex;justify-content:space-between;align-items:center}
  .home{position:absolute;left:87px;top:243px;width:109px;height:3px;border-radius:2px;background:#000}
  svg{display:block}
`, () => {
  const keys = (s) => [...s].map((c) => `<div class="k">${c}</div>`).join('');
  return `
    <div class="sug"><div>"The"</div><div>the</div><div><span class="sep"></span>to</div></div>
    <div class="row a">${keys('qwertyuiop')}</div>
    <div class="row b">${keys('asdfghjkl')}</div>
    <div class="row c"><div class="k f" style="width:31px;margin-right:7px">${icons.shift()}</div>${keys('zxcvbnm')}<div class="k f" style="width:32px;margin-left:7px">${icons.del()}</div></div>
    <div class="row d"><div class="k f w" style="width:66px">ABC</div><div class="k w" style="width:137px">space</div><div class="k w blue" style="width:67px">search</div></div>
    <div class="tools">${icons.smile()}${icons.mic()}</div>
    <div class="home"></div>`;
});

// connectors between the screens, full canvas overlay
box('flow-lines', `
  :host{position:absolute;left:0;top:0;width:4096px;height:1744px;pointer-events:none}
  svg{display:block}
  path{fill:none;stroke:#2bd0ea;stroke-width:1.600}
`, () => {
  const lines = [
    'M611 266Q613 254 624 254H899M894 249L900 254 894 259',
    'M1042 213V192Q1042 178 1056 178H1560Q1580 178 1580 198V211M1575 206L1580 211 1585 206',
    'M1722 760H1745Q1761 760 1761 744V538Q1761 522 1777 522H1973M1968 517L1973 522 1968 527',
    'M2183 300H2276Q2293 300 2293 285V176Q2293 154 2315 154H2633Q2655 154 2655 176V210M2650 205L2655 210 2660 205',
    'M2668 259H2812Q2829 259 2829 275V1050Q2829 1066 2812 1066H2789M2795 1061L2789 1067 2795 1071',
    'M2522 538H2512Q2497 538 2497 553V840Q2497 857 2514 857H3185Q3203 857 3203 837M3198 842L3203 836 3208 842',
    'M3277 488H3535C3552 488 3551 505 3552 510C3554 520 3565 523 3572 523H3585M3580 518L3585 523 3580 528'
  ];
  return `<svg width="4096" height="1744">${lines.map((d) => `<path d="${d}"/>`).join('')}</svg>`;
});
</script>
</body>
</html>
